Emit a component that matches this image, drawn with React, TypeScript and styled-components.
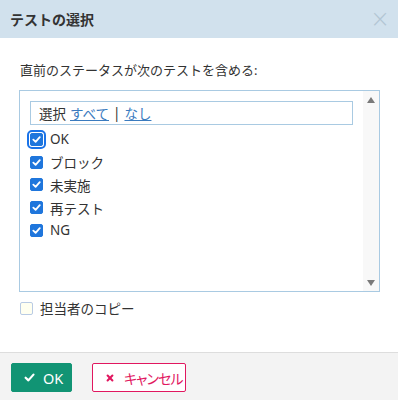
import React from "react";
import styled, { createGlobalStyle } from "styled-components";

const GlobalStyle = createGlobalStyle`
  body {
    margin: 0;
    background: #ffffff;
    font-family: "Noto Sans", "Noto Sans CJK JP", sans-serif;
  }
`;

const Dialog = styled.div`
  width: 398px;
  height: 400px;
  display: flex;
  flex-direction: column;
  background: #ffffff;
  color: #333333;
`;

const Header = styled.div`
  height: 38px;
  flex: none;
  display: flex;
  align-items: center;
  justify-content: space-between;
  padding: 0 8px 0 10px;
  background: #d1e1ed;
`;

const Title = styled.div`
  font-size: 14px;
  font-weight: 700;
  color: #333333;
`;

const Close = styled.span`
  font-size: 24px;
  line-height: 1;
  color: #b3c6d4;
  font-family: "DejaVu Sans", sans-serif;
  font-weight: 300;
`;

const Body = styled.div`
  flex: 1;
  padding: 23px 19px 0 19px;
  display: flex;
  flex-direction: column;
`;

const Label = styled.div`
  font-size: 13px;
  line-height: 18px;
  padding-left: 1px;
`;

const ListBox = styled.div`
  margin-top: 11px;
  height: 202px;
  width: 361px;
  box-sizing: border-box;
  border: 1px solid #a9cae2;
  display: flex;
`;

const ListContent = styled.div`
  flex: 1;
  padding: 10px 10px 0 10px;
  display: flex;
  flex-direction: column;
`;

const Filter = styled.div`
  height: 24px;
  box-sizing: border-box;
  border: 1px solid #a9cae2;
  padding-left: 8px;
  display: flex;
  align-items: center;
  gap: 4px;
  font-size: 13.5px;
  color: #333333;
`;

const FilterLink = styled.a`
  color: #3a7bbf;
  text-decoration: underline;
`;

const Items = styled.div`
  margin-top: 3px;
  display: flex;
  flex-direction: column;
`;

const Item = styled.label`
  height: 22.75px;
  display: flex;
  align-items: center;
  gap: 7px;
  font-size: 13.5px;
  color: #333333;
`;

const Box = styled.span<{ $checked?: boolean; $focused?: boolean }>`
  width: 13px;
  height: 13px;
  box-sizing: border-box;
  border-radius: 2px;
  display: inline-flex;
  align-items: center;
  justify-content: center;
  background: ${(p) => (p.$checked ? "#1f76dc" : "#fffff0")};
  border: 1px solid ${(p) => (p.$checked ? "#1f76dc" : "#b9cbe4")};
  outline: ${(p) => (p.$focused ? "2px solid #1a73e8" : "none")};
  outline-offset: 1px;
`;

const ScrollCol = styled.div`
  width: 16px;
  background: #f8f8f8;
  display: flex;
  flex-direction: column;
  justify-content: space-between;
  align-items: center;
  padding: 6px 0 5px;
`;

const Arrow = styled.span<{ $down?: boolean }>`
  width: 0;
  height: 0;
  border-left: 4px solid transparent;
  border-right: 4px solid transparent;
  ${(p) =>
    p.$down
      ? "border-top: 6px solid #7a7a7a;"
      : "border-bottom: 6px solid #7a7a7a;"}
`;

const CopyRow = styled.label`
  margin-top: 8px;
  padding-left: 1px;
  display: flex;
  align-items: center;
  gap: 7px;
  font-size: 13.5px;
  color: #333333;
  height: 16px;
`;

const Footer = styled.div`
  height: 48px;
  flex: none;
  box-sizing: border-box;
  border-top: 1px solid #dddddd;
  background: #f3f3f3;
  display: flex;
  align-items: flex-start;
  gap: 20px;
  padding: 10px 11px 0;
`;

const Button = styled.button<{ $variant: "ok" | "cancel" }>`
  height: 29px;
  box-sizing: border-box;
  border-radius: 2px;
  display: inline-flex;
  align-items: center;
  white-space: nowrap;
  font-family: "Noto Sans", "Noto Sans CJK JP", sans-serif;
  font-size: 14.5px;
  cursor: pointer;
  svg {
    flex: none;
  }
  ${(p) =>
    p.$variant === "ok"
      ? `
    width: 61px;
    gap: 8px;
    padding: 0 0 0 12px;
    background: #119474;
    border: 1px solid #119474;
    color: #ffffff;
  `
      : `
    width: 94px;
    gap: 10px;
    padding: 0 0 0 13px;
    background: #ffffff;
    border: 1px solid #e1175f;
    color: #e1175f;
    font-size: 14px;
    letter-spacing: -1px;
    font-feature-settings: "palt";
  `}
`;

const Check = ({ size = 9, color = "#ffffff" }: { size?: number; color?: string }) => (
  <svg width={size} height={size} viewBox="0 0 10 10">
    <path d="M1.5 5.2 L4 7.6 L8.6 2.4" fill="none" stroke={color} strokeWidth="2" strokeLinecap="round" strokeLinejoin="round" />
  </svg>
);

const Cross = () => (
  <svg width="8" height="8" viewBox="0 0 10 10">
    <path d="M2 2 L8 8 M8 2 L2 8" stroke="#e1175f" strokeWidth="2.6" strokeLinecap="round" />
  </svg>
);

const items = ["OK", "ブロック", "未実施", "再テスト", "NG"];

export default function App() {
  return (
    <Dialog>
      <GlobalStyle />
      <Header>
        <Title>テストの選択</Title>
        <Close>×</Close>
      </Header>
      <Body>
        <Label>直前のステータスが次のテストを含める:</Label>
        <ListBox>
          <ListContent>
            <Filter>
              選択 <FilterLink>すべて</FilterLink> | <FilterLink>なし</FilterLink>
            </Filter>
            <Items>
              {items.map((name, i) => (
                <Item key={name}>
                  <Box $checked $focused={i === 0}>
                    <Check />
                  </Box>
                  {name}
                </Item>
              ))}
            </Items>
          </ListContent>
          <ScrollCol>
            <Arrow />
            <Arrow $down />
          </ScrollCol>
        </ListBox>
        <CopyRow>
          <Box />
          担当者のコピー
        </CopyRow>
      </Body>
      <Footer>
        <Button $variant="ok">
          <Check size={11} />
          OK
        </Button>
        <Button $variant="cancel">
          <Cross />
          キャンセル
        </Button>
      </Footer>
    </Dialog>
  );
}
